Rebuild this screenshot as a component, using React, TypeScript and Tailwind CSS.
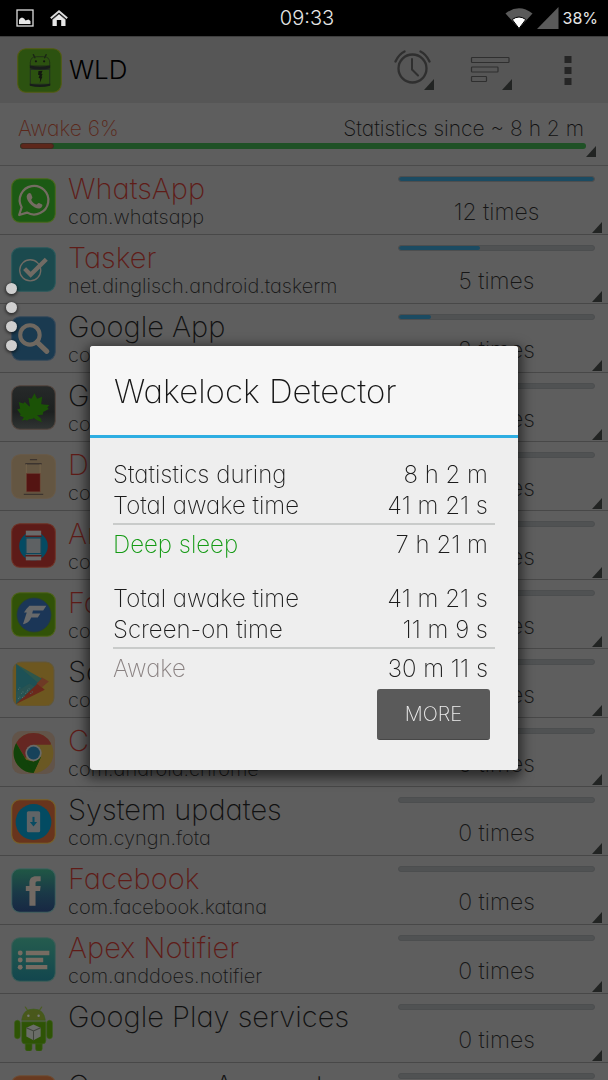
import type { ReactNode } from 'react';

type AppRow = {
  name: string;
  pkg: string;
  times: number;
  alert?: boolean;
  icon: ReactNode;
};

const Corner = ({ className = '' }: { className?: string }) => (
  <svg viewBox="0 0 10 11" className={'h-[11px] w-[10px] ' + className} aria-hidden="true">
    <path d="M10 0V11H0Z" fill="#222423" />
  </svg>
);

const Tile = ({ fill, stroke, children }: { fill: string; stroke: string; children?: ReactNode }) => (
  <>
    <rect x=".7" y=".7" width="42.6" height="42.6" rx="8" fill={fill} stroke={stroke} strokeWidth="1" />
    {children}
  </>
);

const WhatsAppIcon = (
  <Tile fill="#1c5a14" stroke="#4b6a1c">
    <path d="M8 36.2 10.4 28.6A14 14 0 1 1 15.6 33.8Z" fill="none" stroke="#746c62" strokeWidth="2.2" strokeLinejoin="round" />
    <path d="M16.6 15.4c1.4-1.4 2.6-.8 3.2.6l1.1 2.7c.3.8-1.4 2-1.1 2.7 1 2 2.6 3.6 4.8 4.6.8.3 2-2 2.8-1.5l3 1.5c.9.6-.1 3-1.8 3.6-2.600 1-6.200-.8-8.700-3.100-2.700-2.600-4.800-5.800-4.600-8.400.1-1.100.5-1.900 1.300-2.700Z" fill="#746c62" />
  </Tile>
);

const TaskerIcon = (
  <Tile fill="#1b4a4e" stroke="#2b5a5c">
    <circle cx="18.8" cy="22.8" r="10.3" fill="none" stroke="#716b64" strokeWidth="1.3" />
    <path d="m11.800 22.500 3-2.800 4.400 4.400L33 10.500l3 2.900L19.200 30Z" fill="#716b64" />
  </Tile>
);

const SearchIcon = (
  <Tile fill="#1a3a50" stroke="#37495a">
    <circle cx="18.500" cy="18.500" r="9.500" fill="none" stroke="#6f6860" strokeWidth="4" />
    <path d="m25.500 25.500 9.500 9" stroke="#6f6860" strokeWidth="5" strokeLinecap="round" />
  </Tile>
);

const LeafIcon = (
  <Tile fill="url(#leaf)" stroke="#54463f">
    <defs>
      <linearGradient id="leaf" x2="0" y2="1">
        <stop offset="0" stopColor="#262929" />
        <stop offset=".6" stopColor="#1d2020" />
        <stop offset="1" stopColor="#303433" />
      </linearGradient>
    </defs>
    <path d="m23 8 2.500 5.500 5-2-1 7 2 .5 6 .5-2 2.500 1.500 1.500-5.500 3-.5 2.500-5.500.5 4.500 4-1 .500 1.500 2.500-5-2-3.500-2.500-.5 1-4 .5-2 1.500-1-1-4 1 2-3.500-4-1.500 1-1.500-3.500-4.500 3-1-1.500-6.500 4.500 1.500 1.500-1.500 4.500 4.500.5-.5-1.500-8 3 1Z" fill="#1b5206" />
  </Tile>
);

const BatteryIcon = (
  <Tile fill="#645642" stroke="#6a5a46">
    <path d="M18.500 5.500h7M14 9.500h16M12.500 39.500h19" stroke="#3c342f" strokeWidth="1.300" />
    <path d="M15 10v26h13.500V10" fill="none" stroke="#73624a" strokeWidth="1" />
    <rect x="15" y="19" width="13.500" height="18" fill="#541412" stroke="#6b4234" strokeWidth=".6" />
  </Tile>
);

const WatchIcon = (
  <Tile fill="#5d1b18" stroke="#703326">
    <circle cx="22" cy="22.500" r="14" fill="#044b63" />
    <path d="M14.500 7.500h15v29h-15Z" fill="#6a6a6a" />
    <path d="M14 13h16M14 32h16" stroke="#541c1b" strokeWidth="1.600" />
    <rect x="14.500" y="14.500" width="15" height="15.500" fill="#5e6163" stroke="#0c475c" strokeWidth="1.300" />
  </Tile>
);

const FastIcon = (
  <Tile fill="#315208" stroke="#4f641a">
    <circle cx="22.500" cy="22.500" r="16.700" fill="#1b3657" stroke="#273d34" strokeWidth=".7" />
    <path d="m15 16.500 3-3h16.500l-3 4.500H21.500l-.8 3h8l-2.500 4h-6.500c-.6 2-2.500 5.500-8 6.500l3.700-11.500h-2.700Z" fill="#68696a" />
  </Tile>
);

const StoreIcon = (
  <>
    <rect x="2" y="1" width="40" height="43" rx="8" fill="#6d5720" stroke="#625739" />
    <path d="M5 3v39l25-21.500Z" fill="#1d5156" />
    <path d="M5 42V30l13-8 5 3Z" fill="#285352" />
    <path d="M5 42 23 25l3-3 7 6Z" fill="#6b291c" />
    <path d="m25 22 5-6 7 4-7 6Z" fill="#6e3a25" />
    <path d="m7 28 2-2m1 6 2-2m-5 7 2-2m5-3 2-2m-5 6 2-2m3-5 2-2m1 5 2-2" stroke="#537270" strokeWidth="1" strokeDasharray="1 1" />
    <path d="M5 3 30 17l-4 4Z" fill="#2d564b" />
  </>
);

const ChromeIcon = (
  <>
    <rect x="1" y="1" width="42" height="42" rx="9" fill="#625449" />
    <circle cx="22" cy="22.500" r="19.500" fill="#6a5823" />
    <path d="M5.100 12.800A19.500 19.500 0 0 1 38.900 12.800L38.900 14.500H22l-8 13Z" fill="#652722" />
    <path d="M5.100 12.800A19.500 19.500 0 0 0 22 42L29.500 26l-7 5-7.500-1.500Z" fill="#11430a" />
    <path d="M14.500 29 22 31.500 29 27 22 42Z" fill="#11430a" />
    <circle cx="22" cy="22.500" r="8" fill="#6a6a68" />
    <circle cx="22" cy="22.500" r="6.300" fill="#16425a" />
  </>
);

const UpdateIcon = (
  <Tile fill="#68341d" stroke="#796328">
    <circle cx="22" cy="22.500" r="17.500" fill="#034b62" />
    <rect x="15.500" y="12" width="13" height="20.500" rx="1.500" fill="#606466" />
    <path d="M22 17.500v7" stroke="#074b62" strokeWidth="2" />
    <path d="M18.500 22.500h7L22 27Z" fill="#074b62" />
  </Tile>
);

const FacebookIcon = (
  <Tile fill="url(#fb)" stroke="#43615f">
    <defs>
      <linearGradient id="fb" x2="0" y2="1">
        <stop offset="0" stopColor="#205845" />
        <stop offset=".55" stopColor="#1a3947" />
        <stop offset="1" stopColor="#172743" />
      </linearGradient>
    </defs>
    <path d="M18 37V22.500h-3.500v-5H18v-3c0-4.500 2.500-6.500 6.500-6.500h4.500v5h-3c-1.500 0-2 .8-2 2v2.500h5l-.6 5H24V37Z" fill="#716963" />
  </Tile>
);

const NotifierIcon = (
  <Tile fill="url(#apex)" stroke="#3f5d58">
    <defs>
      <linearGradient id="apex" x2="0" y2="1">
        <stop offset="0" stopColor="#255c4e" />
        <stop offset="1" stopColor="#12464e" />
      </linearGradient>
    </defs>
    <g fill="#766c62">
      <circle cx="9" cy="15.700" r="2.400" />
      <circle cx="9" cy="22.500" r="2.400" />
      <circle cx="9" cy="29.500" r="2.400" />
      <path d="M14.500 13.500h23v4.300h-23ZM14.500 20.300h17v4.300h-17ZM14.500 27.300h21v4.300h-21Z" />
    </g>
  </Tile>
);

const AndroidIcon = (
  <>
    <path d="m14 1 3 4.500M30 1l-3 4.500" stroke="#4c5e20" strokeWidth="1.200" strokeLinecap="round" />
    <g fill="#2e5405" stroke="#3d5e1d" strokeWidth=".6">
      <rect x="3.500" y="14" width="5.500" height="18" rx="2.700" />
      <rect x="35" y="14" width="5.500" height="18" rx="2.700" />
      <rect x="14" y="32" width="6.500" height="12" rx="2.500" />
      <rect x="24" y="32" width="6.500" height="12" rx="2.500" />
      <path d="M10.500 15.500h23.500V34q0 3-3 3H13.500q-3 0-3-3Z" />
      <path d="M10.500 14q1-11 11.500-11t11.500 11Z" fill="#49581b" />
    </g>
    <circle cx="17" cy="9.500" r="1.200" fill="#777" />
    <circle cx="27" cy="9.500" r="1.200" fill="#777" />
    <path d="m22 18 7 3.300v8.500L22 33.500l-7-3.700v-8.500Z" fill="#6a6d68" />
    <path d="m15 21.300 7 3.200 7-3.200M22 24.500v9" fill="none" stroke="#40443c" strokeWidth="1" />
  </>
);

const AccountIcon = (
  <Tile fill="#683a20" stroke="#6e4d34">
    <circle cx="22" cy="22" r="13" fill="#606466" />
  </Tile>
);

const rows: AppRow[] = [
  { name: 'WhatsApp', pkg: 'com.whatsapp', times: 12, alert: true, icon: WhatsAppIcon },
  { name: 'Tasker', pkg: 'net.dinglisch.android.taskerm', times: 5, alert: true, icon: TaskerIcon },
  { name: 'Google App', pkg: 'com.google', times: 2, icon: SearchIcon },
  { name: 'Greenify', pkg: 'com.oasisfeng.greenify', times: 0, icon: LeafIcon },
  { name: 'Doze', pkg: 'com.doze', times: 0, alert: true, icon: BatteryIcon },
  { name: 'Android Wear', pkg: 'com.google.wear', times: 0, alert: true, icon: WatchIcon },
  { name: 'Fast', pkg: 'com.fast', times: 0, alert: true, icon: FastIcon },
  { name: 'Social', pkg: 'com.android.vending', times: 0, icon: StoreIcon },
  { name: 'Chrome', pkg: 'com.android.chrome', times: 0, alert: true, icon: ChromeIcon },
  { name: 'System updates', pkg: 'com.cyngn.fota', times: 0, icon: UpdateIcon },
  { name: 'Facebook', pkg: 'com.facebook.katana', times: 0, alert: true, icon: FacebookIcon },
  { name: 'Apex Notifier', pkg: 'com.anddoes.notifier', times: 0, alert: true, icon: NotifierIcon },
  { name: 'Google Play services', pkg: '', times: 0, icon: AndroidIcon },
  { name: 'Cyanogen Account', pkg: 'com.cyngn.account', times: 0, icon: AccountIcon },
];

const maxTimes = 12;

function StatusBar() {
  return (
    <div className="grid h-9 shrink-0 grid-cols-3 items-center bg-black pr-2.5 pl-4 text-[#e6e6e6]">
      <div className="flex items-center gap-4">
        <svg viewBox="0 0 18 18" className="size-[18px]" aria-hidden="true">
          <rect x="1" y="1" width="16" height="16" fill="none" stroke="#ddd" strokeWidth="1.300" />
          <path d="M3 15v-4l1-1.500 2-1 2 1 1.500 2 3-1 2 1.500V15Z" fill="#e8e8e8" />
        </svg>
        <svg viewBox="0 0 18 18" className="size-[18px]" aria-hidden="true">
          <path d="M9 5 15.500 10.500V17h-4.300v-6H6.800v6H2.500v-6.500Z" fill="#e8e8e8" />
          <path d="M.8 9.200 9 2.200l8.200 7" fill="none" stroke="#dcdcdc" strokeWidth="2" />
          <path d="M9 5 16 11M9 5 2 11" stroke="#555" strokeWidth=".7" />
        </svg>
      </div>
      <div className="text-center text-[20px] leading-6 font-light">09:33</div>
      <div className="flex items-center justify-end gap-1">
        <svg viewBox="0 0 28 22" className="h-[22px] w-7" aria-hidden="true">
          <path d="M.5 6.500Q14-4 27.500 6.500L14 21.500Z" fill="#5a5a5a" />
          <path d="M7.200 12.500Q14 7.500 20.800 12.500L14 21.500Z" fill="#fff" stroke="#000" strokeWidth="1" />
        </svg>
        <svg viewBox="0 0 22 22" className="size-[22px]" aria-hidden="true">
          <path d="M21.500 0V22H0Z" fill="#5a5a5a" />
        </svg>
        <span className="text-base leading-6 font-normal">38%</span>
      </div>
    </div>
  );
}

function ActionBar() {
  return (
    <header className="flex h-[67px] shrink-0 items-center border-t border-[#3e3e3e] bg-[#565656] pr-5 pl-[17px]">
      <svg viewBox="0 0 44 44" className="size-[45px]" aria-hidden="true">
        <rect x=".7" y=".7" width="42.600" height="42.600" rx="8" fill="#2c5210" stroke="#545c12" />
        <path d="m16 6.500 1.500 3M28.500 6.500l-1.500 3" stroke="#1b2416" strokeWidth="1.300" strokeLinecap="round" />
        <path d="M13 17.500v-3q0-6 6-6h7q6 0 6 6v3Z" fill="none" stroke="#1f2b18" strokeWidth=".8" />
        <path d="M13 21h19v14.500H13Z" fill="none" stroke="#222f20" strokeWidth="1" />
        <path d="M12.500 17q10 2 20 0v3q-10 2-20 0ZM12.500 35q10 2 20 0v2q-10 2.500-20 0Z" fill="#181d1a" />
        <circle cx="18.500" cy="13" r="1.100" fill="#151a12" />
        <circle cx="26.500" cy="13" r="1.100" fill="#151a12" />
        <path d="m21 22.500 4-.3-1.200 3 1.200.2-1 2.500.8.300-2.500 6 .3-4.500-1.500-.5 1-2.500-1.500-.5Z" fill="#12160f" />
      </svg>
      <h1 className="ml-[7px] text-[26px] leading-8 font-light text-black">WLD</h1>
      <div className="ml-auto flex items-center">
        <button type="button" aria-label="Alarm wakelocks" className="flex items-end">
          <svg viewBox="0 3 38 36" className="h-9 w-[38px] overflow-visible" fill="none" stroke="#2f2f2f" strokeLinecap="round" aria-hidden="true">
            <circle cx="18.500" cy="19.500" r="14" strokeWidth="2.300" />
            <path d="M18 10v10.500l6 6" strokeWidth="2" />
            <path d="M1.500 12.500Q5 5 10.500 2.500M35.500 12.500Q32 5 26.500 2.500" strokeWidth="2.400" />
          </svg>
          <Corner className="-mb-0.5 -ml-2" />
        </button>
        <button type="button" aria-label="Sort" className="ml-9 flex items-end">
          <svg viewBox="0 2 40 36" className="h-9 w-10" fill="none" stroke="#2f2f2f" strokeWidth="1.200" aria-hidden="true">
            <rect x="1.500" y="7.500" width="37.500" height="5" rx=".8" />
            <rect x="1.500" y="17" width="26.500" height="5" rx=".8" />
            <rect x="1.500" y="26.500" width="15" height="5" rx=".8" />
          </svg>
          <Corner className="-mb-0.5 -ml-2" />
        </button>
        <button type="button" aria-label="More options" className="ml-9 flex w-10 justify-center">
          <svg viewBox="0 0 8 29" className="h-[29px] w-2" fill="#252525" aria-hidden="true">
            <path d="M.5 0h7v7h-7ZM.5 11h7v7h-7ZM.5 22h7v7h-7Z" />
          </svg>
        </button>
      </div>
    </header>
  );
}

function Summary() {
  return (
    <section className="flex h-[63px] shrink-0 flex-col border-b border-[#4b4b4b] pt-3.5 pr-3 pl-[18px]">
      <div className="flex justify-between pr-3 text-[21px] leading-6">
        <span className="text-[#5b281b]">Awake 6%</span>
        <span className="text-[#111]">Statistics since ~ 8 h 2 m</span>
      </div>
      <div className="flex items-start">
        <div className="mt-0.5 ml-0.5 flex h-[6px] flex-1 overflow-hidden rounded-full bg-[#1f5126]">
          <div className="w-[6%] rounded-full border border-[#3f2822] bg-[#5d271b]" />
        </div>
        <Corner className="mt-[5px]" />
      </div>
    </section>
  );
}

function Row({ row }: { row: AppRow }) {
  return (
    <li className="flex h-[69px] items-start border-b border-[#484848] pr-1.5 pl-[11px]">
      <svg viewBox="0 0 44 44" className="mt-3 size-[45px] shrink-0" aria-hidden="true">
        {row.icon}
      </svg>
      <div className="mt-[7px] ml-3 min-w-0 flex-1 whitespace-nowrap">
        <div className={'text-[29px] leading-8 ' + (row.alert ? 'text-[#5f1c18]' : 'text-[#111]')}>{row.name}</div>
        <div className="text-[20px] leading-6 text-[#151515]">{row.pkg}</div>
      </div>
      <div className="mt-2.5 mr-[5px] w-1/3 max-w-[198px] shrink-0">
        <div className="h-[6px] overflow-hidden rounded-full border border-[#4c4e4f] bg-[#505253]">
          <div className="h-full rounded-full bg-[#1b4b62]" style={{ width: (row.times / maxTimes) * 100 + '%' }} />
        </div>
        <div className="mt-4 text-center text-[23px] leading-7 text-[#161616]">{row.times} times</div>
      </div>
      <Corner className="-ml-2 mb-px self-end" />
    </li>
  );
}

function Stat({ label, value, tone = 'text-[#1c1c1c]' }: { label: string; value: string; tone?: string }) {
  return (
    <div className="flex justify-between pr-[7px] text-[24px] leading-[31px]">
      <dt className={tone}>{label}</dt>
      <dd>{value}</dd>
    </div>
  );
}

function Dialog() {
  return (
    <div className="fixed inset-x-0 top-9 bottom-0 flex items-center justify-center px-[90px]">
      <div role="dialog" aria-labelledby="dialog-title" className="w-full max-w-[428px] overflow-hidden rounded-[3px] bg-[#eeeeee] text-[#1c1c1c] shadow-[0_4px_12px_4px_rgba(0,0,0,0.55)]">
        <h2 id="dialog-title" className="border-b-[3px] border-[#2eaee2] bg-[#f6f6f6] px-6 pt-[25px] pb-6 text-[33px] leading-10 text-[#161616]">
          Wakelock Detector
        </h2>
        <div className="px-[23px] pt-[21px] pb-[30px]">
          <dl>
            <Stat label="Statistics during" value="8 h 2 m" />
            <Stat label="Total awake time" value="41 m 21 s" />
          </dl>
          <dl className="mt-0.5 border-t-2 border-[#c9cbca] pt-1">
            <Stat label="Deep sleep" value="7 h 21 m" tone="text-[#149a14]" />
          </dl>
          <dl className="mt-[23px]">
            <Stat label="Total awake time" value="41 m 21 s" />
            <Stat label="Screen-on time" value="11 m 9 s" />
          </dl>
          <dl className="mt-0.5 border-t-2 border-[#c9cbca] pt-1">
            <Stat label="Awake" value="30 m 11 s" tone="text-[#8a8282]" />
          </dl>
          <div className="mt-[5px] flex justify-end pr-[5px]">
            <button type="button" className="h-[51px] w-[113px] rounded-[3px] border-b border-[#474747] bg-[#5a5a5a] text-[20px] text-[#eee]">
              MORE
            </button>
          </div>
        </div>
      </div>
    </div>
  );
}

export default function App() {
  return (
    <div className="flex h-screen flex-col overflow-hidden bg-[#5e5e5e] font-['Inter','Liberation_Sans',sans-serif] font-extralight [font-feature-settings:'cv11']">
      <StatusBar />
      <ActionBar />
      <Summary />
      <ul className="min-h-0 flex-1 overflow-hidden">
        {rows.map((row) => (
          <Row key={row.name} row={row} />
        ))}
      </ul>
      <div className="absolute top-[283px] left-1.5 flex flex-col gap-2" aria-hidden="true">
        <i className="size-[11px] rounded-full bg-[#cfcfcf] shadow-[0_1px_3px_1px_rgba(0,0,0,0.5)]" />
        <i className="size-[11px] rounded-full bg-[#cfcfcf] shadow-[0_1px_3px_1px_rgba(0,0,0,0.5)]" />
        <i className="size-[11px] rounded-full bg-[#cfcfcf] shadow-[0_1px_3px_1px_rgba(0,0,0,0.5)]" />
        <i className="size-[11px] rounded-full bg-[#cfcfcf] shadow-[0_1px_3px_1px_rgba(0,0,0,0.5)]" />
      </div>
      <Dialog />
    </div>
  );
}
